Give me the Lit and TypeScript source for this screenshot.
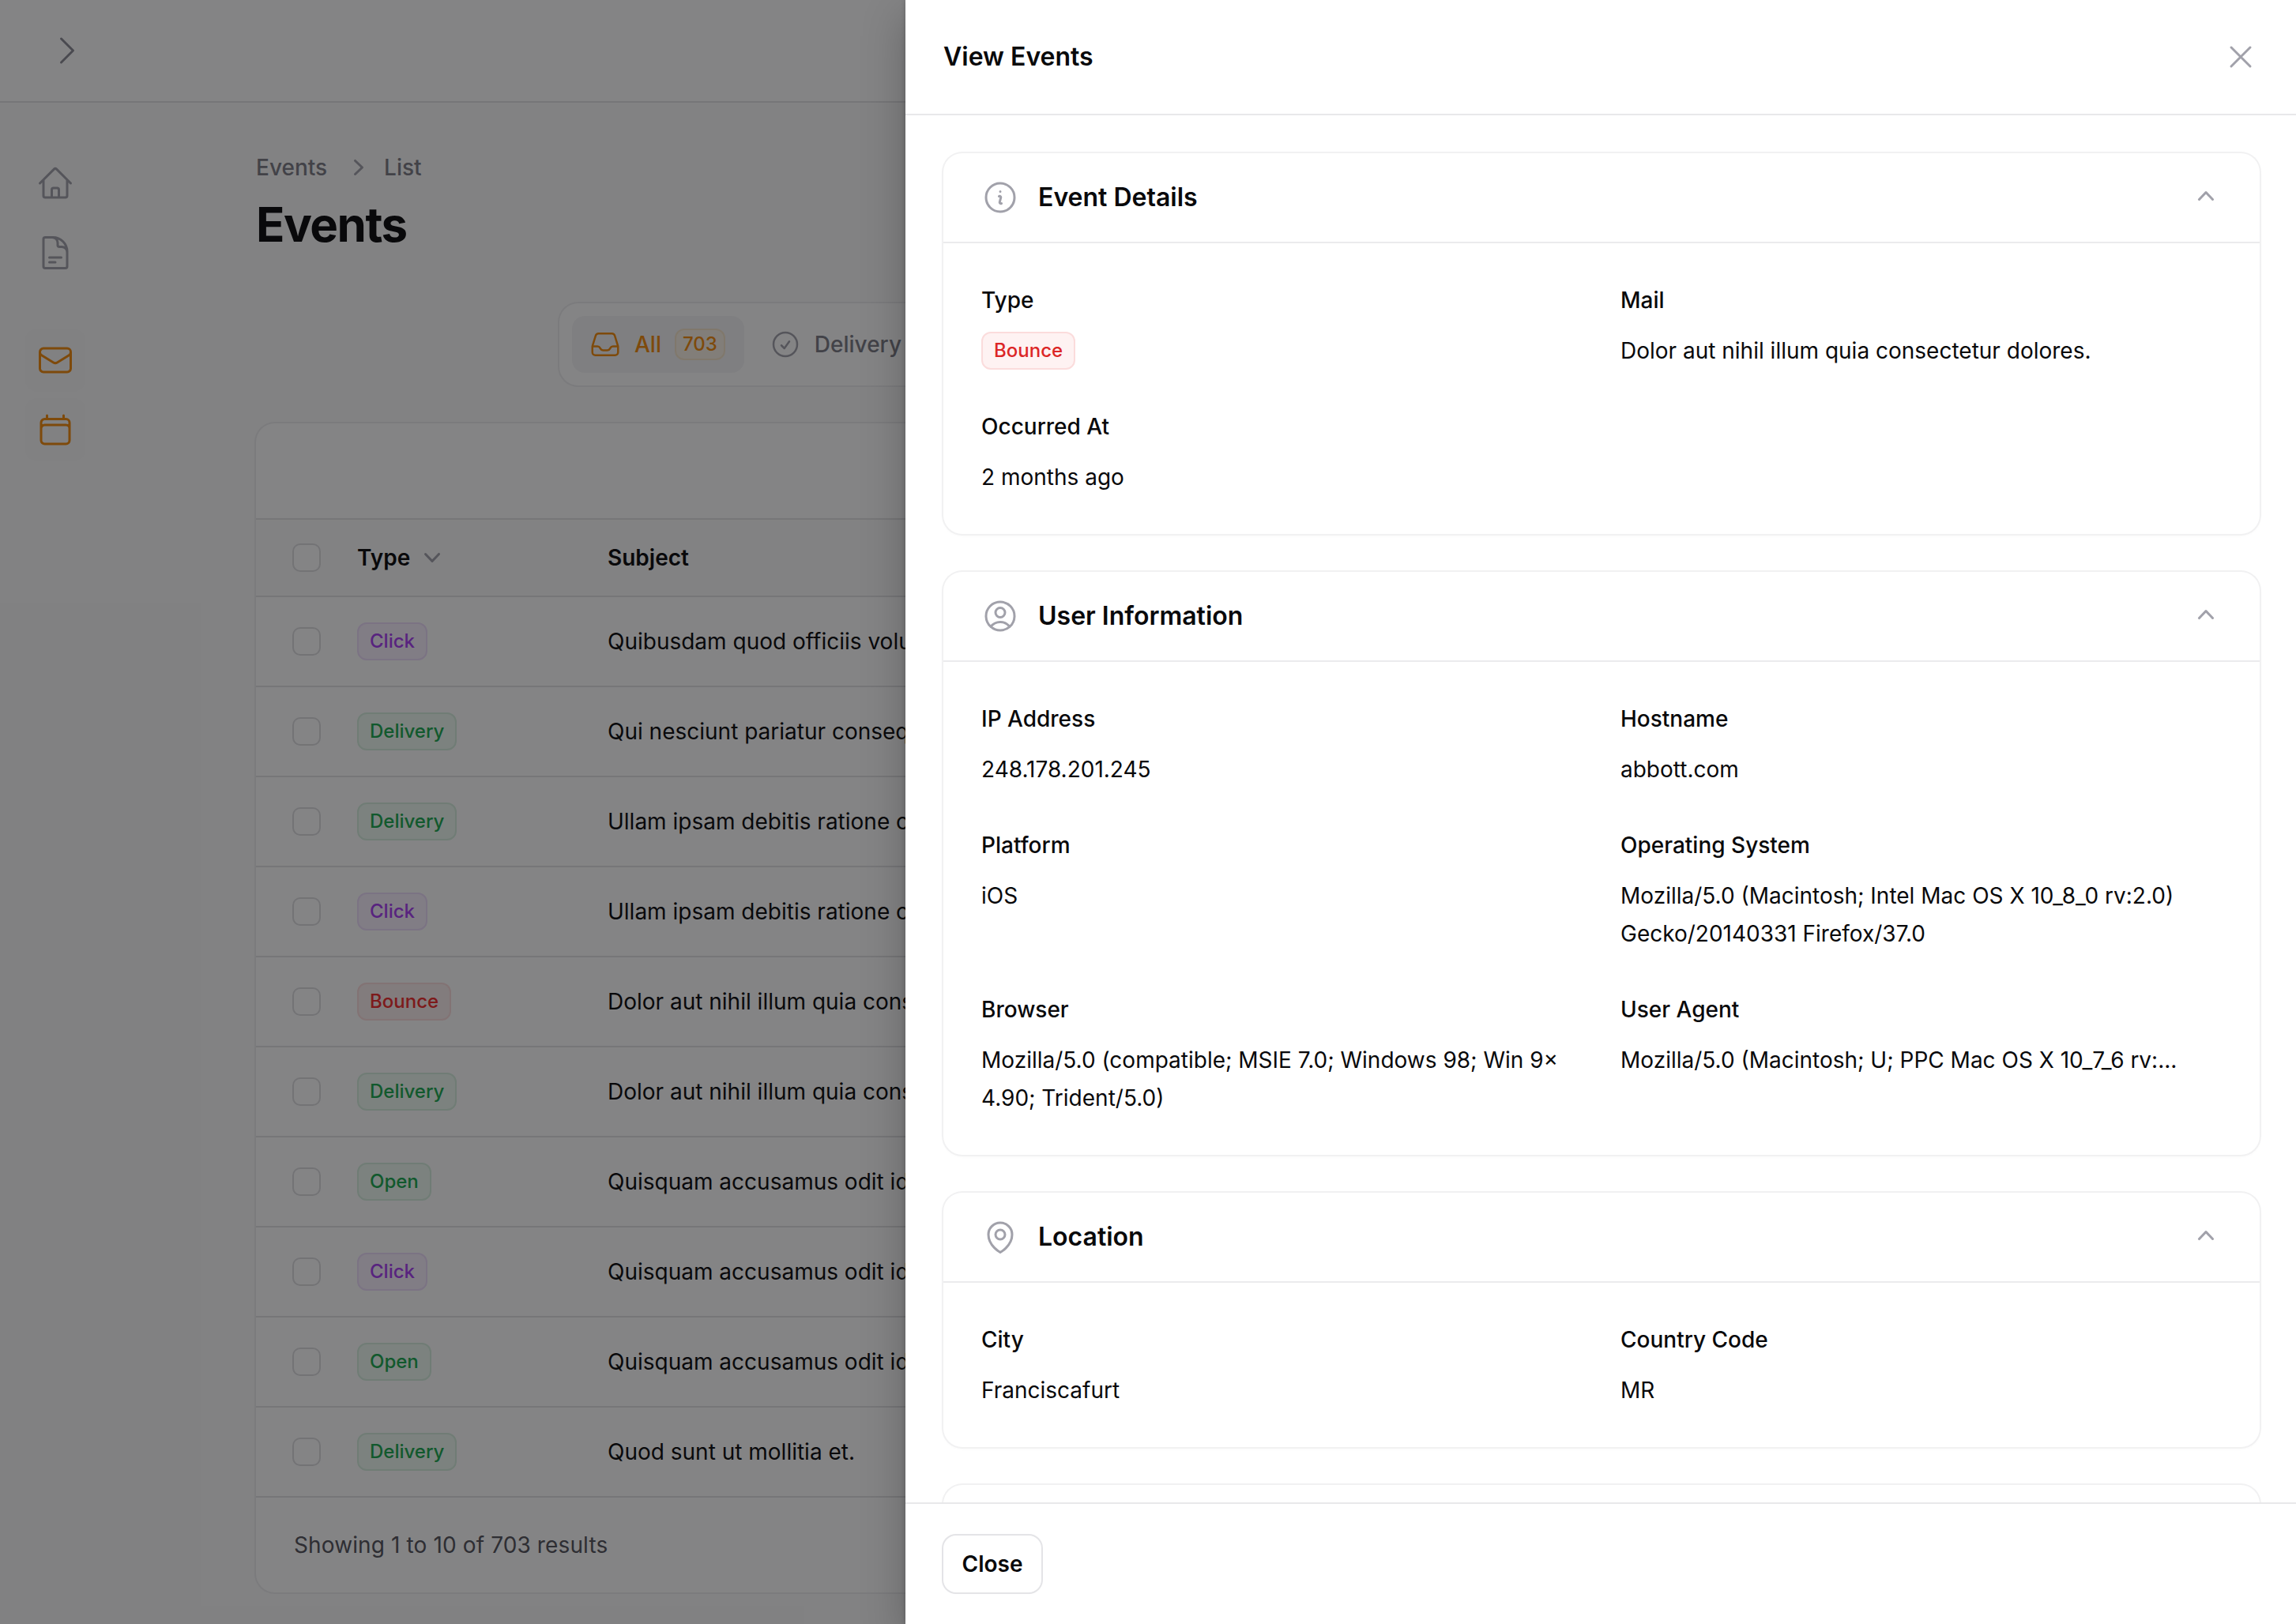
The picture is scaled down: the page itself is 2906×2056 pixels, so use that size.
import { LitElement, html, css, svg } from "lit";
import { customElement } from "lit/decorators.js";

const o = (d: string) => svg`<path d=${d} fill="none" stroke="currentColor" stroke-width="1.5" stroke-linecap="round" stroke-linejoin="round"/>`;
const icon = (d: string | string[], cls = "i48") =>
  html`<svg class=${cls} viewBox="0 0 24 24">${(Array.isArray(d) ? d : [d]).map(o)}</svg>`;
const mini = (d: string, cls: string) =>
  html`<svg class=${cls} viewBox="0 0 20 20"><path d=${d} fill="currentColor" fill-rule="evenodd" clip-rule="evenodd"/></svg>`;

const P = {
  home: "m2.25 12 8.954-8.955c.44-.439 1.152-.439 1.591 0L21.75 12M4.5 9.75v10.125c0 .621.504 1.125 1.125 1.125H9.75v-4.875c0-.621.504-1.125 1.125-1.125h2.25c.621 0 1.125.504 1.125 1.125V21h4.125c.621 0 1.125-.504 1.125-1.125V9.75M8.25 21h8.25",
  doc: "M19.5 14.25v-2.625a3.375 3.375 0 0 0-3.375-3.375h-1.5A1.125 1.125 0 0 1 13.5 7.125v-1.5a3.375 3.375 0 0 0-3.375-3.375H8.25m0 12.75h7.5m-7.5 3H12M10.5 2.25H5.625c-.621 0-1.125.504-1.125 1.125v17.25c0 .621.504 1.125 1.125 1.125h12.75c.621 0 1.125-.504 1.125-1.125V11.25a9 9 0 0 0-9-9Z",
  mail: "M21.75 6.75v10.5a2.25 2.25 0 0 1-2.25 2.25h-15a2.25 2.25 0 0 1-2.25-2.25V6.75m19.5 0A2.25 2.25 0 0 0 19.5 4.5h-15a2.25 2.25 0 0 0-2.25 2.25m19.5 0v.243a2.25 2.25 0 0 1-1.07 1.916l-7.5 4.615a2.25 2.25 0 0 1-2.36 0L3.32 8.91a2.25 2.25 0 0 1-1.07-1.916V6.75",
  cal: "M6.75 3v2.25M17.25 3v2.25M3 18.75V7.5a2.25 2.25 0 0 1 2.25-2.25h13.5A2.25 2.25 0 0 1 21 7.5v11.25m-18 0A2.25 2.25 0 0 0 5.25 21h13.5A2.25 2.25 0 0 0 21 18.75m-18 0v-7.5A2.25 2.25 0 0 1 5.25 9h13.5A2.25 2.25 0 0 1 21 11.25v7.5",
  inbox: "M2.25 13.5h3.86a2.25 2.25 0 0 1 2.012 1.244l.256.512a2.25 2.25 0 0 0 2.013 1.244h3.218a2.25 2.25 0 0 0 2.013-1.244l.256-.512a2.25 2.25 0 0 1 2.013-1.244h3.859m-19.5.338V18a2.25 2.25 0 0 0 2.25 2.25h15A2.25 2.25 0 0 0 21.75 18v-4.162c0-.224-.034-.447-.1-.661L19.24 5.338a2.25 2.25 0 0 0-2.15-1.588H6.911a2.25 2.25 0 0 0-2.15 1.588L2.35 13.177a2.25 2.25 0 0 0-.1.661Z",
  check: "M9 12.75 11.25 15 15 9.75M21 12a9 9 0 1 1-18 0 9 9 0 0 1 18 0Z",
  info: "m11.25 11.25.041-.02a.75.75 0 0 1 1.063.852l-.708 2.836a.75.75 0 0 0 1.063.853l.041-.021M21 12a9 9 0 1 1-18 0 9 9 0 0 1 18 0Zm-9-3.75h.008v.008H12V8.25Z",
  user: "M17.982 18.725A7.488 7.488 0 0 0 12 15.75a7.488 7.488 0 0 0-5.982 2.975m11.963 0a9 9 0 1 0-11.963 0m11.963 0A8.966 8.966 0 0 1 12 21a8.966 8.966 0 0 1-5.982-2.275M15 9.75a3 3 0 1 1-6 0 3 3 0 0 1 6 0Z",
  pin: ["M15 10.5a3 3 0 1 1-6 0 3 3 0 0 1 6 0Z", "M19.5 10.5c0 7.142-7.5 11.25-7.5 11.25S4.5 17.642 4.5 10.5a7.5 7.5 0 1 1 15 0Z"],
  right: "m8.25 4.5 7.5 7.5-7.5 7.5",
  x: "M6 18 18 6M6 6l12 12",
  mRight: "M7.21 14.77a.75.75 0 01.02-1.06L11.168 10 7.23 6.29a.75.75 0 111.04-1.08l4.5 4.25a.75.75 0 010 1.08l-4.5 4.25a.75.75 0 01-1.06-.02z",
  mUp: "M14.77 12.79a.75.75 0 01-1.06-.02L10 8.832 6.29 12.77a.75.75 0 11-1.08-1.04l4.25-4.5a.75.75 0 011.08 0l4.25 4.5a.75.75 0 01-.02 1.06z",
  mDown: "M5.23 7.21a.75.75 0 011.06.02L10 11.168l3.71-3.938a.75.75 0 111.08 1.04l-4.25 4.5a.75.75 0 01-1.08 0l-4.25-4.5a.75.75 0 01.02-1.06z",
};

const ROWS: [string, string][] = [
  ["Click", "Quibusdam quod officiis voluptatem et."],
  ["Delivery", "Qui nesciunt pariatur consequatur."],
  ["Delivery", "Ullam ipsam debitis ratione corporis."],
  ["Click", "Ullam ipsam debitis ratione corporis."],
  ["Bounce", "Dolor aut nihil illum quia consectetur dolores."],
  ["Delivery", "Dolor aut nihil illum quia consectetur dolores."],
  ["Open", "Quisquam accusamus odit id sit."],
  ["Click", "Quisquam accusamus odit id sit."],
  ["Open", "Quisquam accusamus odit id sit."],
  ["Delivery", "Quod sunt ut mollitia et."],
];

const TONE: Record<string, string> = { Click: "purple", Delivery: "green", Open: "green", Bounce: "red" };

type Entry = [string, string];
const SECTIONS: { title: string; icon: string | string[]; entries: Entry[] }[] = [
  {
    title: "Event Details",
    icon: P.info,
    entries: [
      ["Type", "@Bounce"],
      ["Mail", "Dolor aut nihil illum quia consectetur dolores."],
      ["Occurred At", "2 months ago"],
    ],
  },
  {
    title: "User Information",
    icon: P.user,
    entries: [
      ["IP Address", "248.178.201.245"],
      ["Hostname", "abbott.com"],
      ["Platform", "iOS"],
      ["Operating System", "Mozilla/5.0 (Macintosh; Intel Mac OS X 10_8_0 rv:2.0) Gecko/20140331 Firefox/37.0"],
      ["Browser", "Mozilla/5.0 (compatible; MSIE 7.0; Windows 98; Win 9× 4.90; Trident/5.0)"],
      ["User Agent", "Mozilla/5.0 (Macintosh; U; PPC Mac OS X 10_7_6 rv:..."],
    ],
  },
  {
    title: "Location",
    icon: P.pin,
    entries: [
      ["City", "Franciscafurt"],
      ["Country Code", "MR"],
    ],
  },
];

@customElement("app-root")
export class AppRoot extends LitElement {
  static styles = css`
    :host {
      display: block;
      width: 2906px;
      height: 2056px;
      position: relative;
      overflow: hidden;
      background: #fafafa;
      font-family: Inter, "Liberation Sans", sans-serif;
      font-size: 28px;
      line-height: 40px;
      color: #09090b;
    }
    * { box-sizing: border-box; }
    svg { display: block; flex: none; }
    .i48 { width: 48px; height: 48px; }
    .i40 { width: 40px; height: 40px; }

    .topbar { height: 130px; background: #fff; border-bottom: 2px solid #e2e2e4; padding: 40px 61px; color: #8a8a94; }
    .shell { display: flex; }
    .side { width: 140px; flex: none; padding: 62px 32px 0; display: flex; flex-direction: column; gap: 8px; }
    .nav { height: 80px; border-radius: 16px; display: flex; align-items: center; justify-content: center; color: #a1a1aa; }
    .nav.on { background: #f8f8f9; color: #f28a0a; }
    .nav.first { margin-top: 48px; }
    .main { flex: 1; min-width: 0; padding: 62px 64px 0 184px; }
    .crumbs { display: flex; align-items: center; color: #7a7a84; font-weight: 500; height: 40px; }
    .crumbs .sep { margin: 0 12px 0 20px; color: #a1a1aa; }
    h1 { margin: 16px 0 0; font-size: 60px; line-height: 72px; font-weight: 700; letter-spacing: -1.5px; color: #09090b; }

    .tabs { margin: 64px 0 0 384px; height: 104px; width: max-content; display: flex; gap: 10px; padding: 16px; background: #fff; border-radius: 24px; box-shadow: 0 0 0 2px #ececee; }
    .tab { height: 72px; display: flex; align-items: center; gap: 17px; padding: 0 24px 0 22px; border-radius: 16px; color: #7a7a84; font-weight: 500; }
    .tab svg { color: #a1a1aa; }
    .tab.on { background: #f5f5f6; color: #f28a0a; }
    .tab.on svg { color: #f28a0a; }
    .count { height: 40px; padding: 0 8px; border-radius: 12px; font-size: 24px; line-height: 36px; font-weight: 500; border: 2px solid #f7e6cc; background: #faf3e6; }

    .card { margin-top: 48px; height: 1480px; background: #fff; border-radius: 24px; box-shadow: 0 0 0 2px #ececee; overflow: hidden; }
    .toolbar { height: 122px; border-bottom: 2px solid #e2e2e4; }
    .row { display: grid; grid-template-columns: 32px 269px 1fr; column-gap: 48px; align-items: center; padding-left: 48px; height: 114px; border-bottom: 2px solid #e2e2e4; }
    .row.head { height: 98px; background: #fafafa; font-weight: 600; }
    .row .type { display: flex; align-items: center; gap: 8px; }
    .sub { white-space: nowrap; }
    .box { width: 32px; height: 32px; border-radius: 8px; background: #fff; box-shadow: 0 0 0 2px #dcdcdf; }
    .cdown { color: #a1a1aa; }
    .results { height: 120px; padding-left: 48px; display: flex; align-items: center; color: #52525b; letter-spacing: 0.12px; }

    .badge { display: inline-flex; align-items: center; height: 48px; padding: 0 14px; border-radius: 12px; border: 2px solid; font-size: 24px; line-height: 32px; font-weight: 500; vertical-align: top; }
    .badge.purple { color: #a63cf2; background: #f9f0ff; border-color: #ecdcfb; }
    .badge.green { color: #18a84e; background: #eefaf2; border-color: #d6efdf; }
    .badge.red { color: #dc2626; background: #fef2f2; border-color: #fbdcdc; }
    .card .badge.red { color: #f02a2a; background: #fbeeee; }

    .scrim { position: absolute; inset: 0; background: rgba(9, 9, 11, 0.5); }
    .panel { position: absolute; top: 0; right: 0; bottom: 0; width: 1760px; background: #fff; display: flex; flex-direction: column; box-shadow: 0 20px 50px rgba(0, 0, 0, 0.25), 0 0 6px rgba(0, 0, 0, 0.2); }
    .phead { height: 146px; flex: none; border-bottom: 2px solid #e8e8ea; display: flex; align-items: center; justify-content: space-between; padding: 0 46px 0 48px; }
    .phead h2 { margin: 0; font-size: 32px; line-height: 48px; font-weight: 600; }
    .close { color: #a1a1aa; }
    .pbody { flex: 1; min-height: 0; overflow: hidden; padding: 48px 46px 0 48px; display: flex; flex-direction: column; gap: 48px; }
    .sec { flex: none; background: #fff; border-radius: 24px; box-shadow: 0 0 0 2px #f1f1f2, 0 2px 4px rgba(0, 0, 0, 0.03); }
    .sec header { height: 114px; border-bottom: 2px solid #ebebed; display: flex; align-items: center; padding: 0 48px; gap: 24px; }
    .sec header .ic { color: #a1a1aa; }
    .sec h3 { margin: 0; flex: 1; font-size: 32px; line-height: 48px; font-weight: 600; }
    .sec .chev { color: #a1a1aa; margin-bottom: 4px; }
    .grid { padding: 48px; display: grid; grid-template-columns: 1fr 1fr; gap: 48px; }
    .lab { font-weight: 450; line-height: 48px; }
    .val { margin-top: 16px; line-height: 48px; min-height: 48px; }
    .stub { height: 200px; }
    .pfoot { height: 154px; flex: none; background: #fff; border-top: 2px solid #e8e8ea; padding: 40px 48px; }
    .btn { width: 124px; height: 72px; border-radius: 16px; background: #fff; box-shadow: 0 0 0 2px #e4e4e7; display: flex; align-items: center; justify-content: center; font-weight: 600; }
  `;

  private badge(t: string) {
    return html`<span class="badge ${TONE[t]}">${t}</span>`;
  }

  render() {
    return html`
      <div class="topbar">${icon(P.right)}</div>
      <div class="shell">
        <nav class="side">
          <div class="nav">${icon(P.home)}</div>
          <div class="nav">${icon(P.doc)}</div>
          <div class="nav on first">${icon(P.mail)}</div>
          <div class="nav on">${icon(P.cal)}</div>
        </nav>
        <main class="main">
          <div class="crumbs"><span>Events</span>${mini(P.mRight, "i40 sep")}<span>List</span></div>
          <h1>Events</h1>
          <div class="tabs">
            <div class="tab on">${icon(P.inbox, "i40")}<span>All</span><span class="count">703</span></div>
            <div class="tab">${icon(P.check, "i40")}<span>Delivery</span></div>
          </div>
          <section class="card">
            <div class="toolbar"></div>
            <div class="row head">
              <div class="box"></div>
              <div class="type">Type ${mini(P.mDown, "i40 cdown")}</div>
              <div class="sub">Subject</div>
            </div>
            ${ROWS.map(
              ([t, s]) => html`<div class="row">
                <div class="box"></div>
                <div>${this.badge(t)}</div>
                <div class="sub">${s}</div>
              </div>`
            )}
            <div class="results">Showing 1 to 10 of 703 results</div>
          </section>
        </main>
      </div>
      <div class="scrim"></div>
      <aside class="panel">
        <div class="phead"><h2>View Events</h2><span class="close">${icon(P.x)}</span></div>
        <div class="pbody">
          ${SECTIONS.map(
            (s) => html`<section class="sec">
              <header>
                <span class="ic">${icon(s.icon)}</span>
                <h3>${s.title}</h3>
                ${mini(P.mUp, "i40 chev")}
              </header>
              <div class="grid">
                ${s.entries.map(
                  (e) => html`<div>
                    <div class="lab">${e[0]}</div>
                    <div class="val">${e[1].startsWith("@") ? this.badge(e[1].slice(1)) : e[1]}</div>
                  </div>`
                )}
              </div>
            </section>`
          )}
          <section class="sec stub"></section>
        </div>
        <div class="pfoot"><div class="btn">Close</div></div>
      </aside>
    `;
  }
}
